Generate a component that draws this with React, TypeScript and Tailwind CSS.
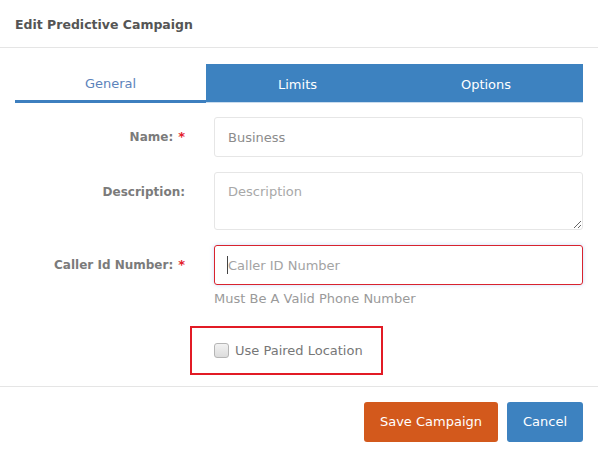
import React from 'react';

const FONT = { fontFamily: '"DejaVu Sans", "Open Sans", sans-serif' };

const Label: React.FC<{ text: string; required?: boolean }> = ({ text, required }) => (
  <div className="w-[170px] shrink-0 pt-[10px] text-right text-[12px] leading-[20px] font-bold text-[#7b7b7b]">
    {text}
    {required && <span className="ml-[5px] text-[13px] text-[#e3202b]">*</span>}
  </div>
);

export default function App() {
  return (
    <div className="w-[598px] h-[457px] bg-white text-[13px] overflow-hidden" style={FONT}>
      {/* Header */}
      <div className="h-[48px] flex items-center px-[15px] pt-[3px] border-b border-[#e5e5e5]">
        <h3 className="text-[12.5px] font-bold text-[#555555]">Edit Predictive Campaign</h3>
      </div>

      <div className="px-[15px] pt-[16px]">
        {/* Tabs */}
        <div className="grid grid-cols-[191px_183px_1fr] h-[39px] text-[13px]">
          <div className="flex items-center justify-center pt-[3px] border-b-[3px] border-[#3d7fbf] text-[#5c83bb]">General</div>
          <div className="flex items-center justify-center pt-[3px] bg-[#3d82c0] text-white border-b border-[#c9dcee]">Limits</div>
          <div className="flex items-center justify-center pt-[3px] bg-[#3d82c0] text-white border-b border-[#c9dcee]">Options</div>
        </div>

        {/* Name */}
        <div className="flex mt-[14px]">
          <Label text="Name:" required />
          <div className="ml-[29px] flex-1">
            <input
              defaultValue="Business"
              className="w-full h-[40px] px-[13px] rounded-[3px] border border-[#e6e6e6] text-[13px] text-[#8c8c8c] outline-none"
            />
          </div>
        </div>

        {/* Description */}
        <div className="flex mt-[15px]">
          <Label text="Description:" />
          <div className="ml-[29px] flex-1">
            <textarea
              placeholder="Description"
              className="block w-full h-[58px] px-[13px] py-[9px] rounded-[3px] border border-[#e6e6e6] text-[13px] text-[#8c8c8c] placeholder:text-[#a8a8a8] outline-none"
            />
          </div>
        </div>

        {/* Caller Id */}
        <div className="flex mt-[15px]">
          <Label text="Caller Id Number:" required />
          <div className="ml-[29px] flex-1">
            <div className="relative">
              <input
                placeholder="Caller ID Number"
                className="w-full h-[40px] px-[13px] rounded-[3px] border border-[#d8232f] shadow-[0_0_4px_rgba(102,153,230,0.35)] text-[13px] placeholder:text-[#a3a3a3] outline-none"
              />
              <span className="absolute left-[13px] top-[11px] w-px h-[18px] bg-[#444]" />
            </div>
            <p className="mt-[5px] text-[13px] leading-[18px] text-[#9a9a9a]">Must Be A Valid Phone Number</p>
          </div>
        </div>

        {/* Paired location */}
        <div className="mt-[18px] ml-[175px] w-[193px] h-[49px] border-2 border-[#e21b25] flex items-center pl-[22px]">
          <label className="flex items-center gap-[6px] text-[13px] text-[#777]">
            <span className="w-[15px] h-[15px] rounded-[3px] border border-[#b5b5b5] bg-gradient-to-b from-[#f2f2f2] to-[#dcdcdc]" />
            Use Paired Location
          </label>
        </div>
      </div>

      {/* Footer */}
      <div className="mt-[11px] border-t border-[#e5e5e5] flex justify-end gap-[9px] px-[15px] pt-[15px]">
        <button className="h-[40px] w-[134px] rounded-[3px] bg-[#d3591c] text-white text-[13px]">Save Campaign</button>
        <button className="h-[40px] w-[76px] rounded-[3px] bg-[#3d82c0] text-white text-[13px]">Cancel</button>
      </div>
    </div>
  );
}
